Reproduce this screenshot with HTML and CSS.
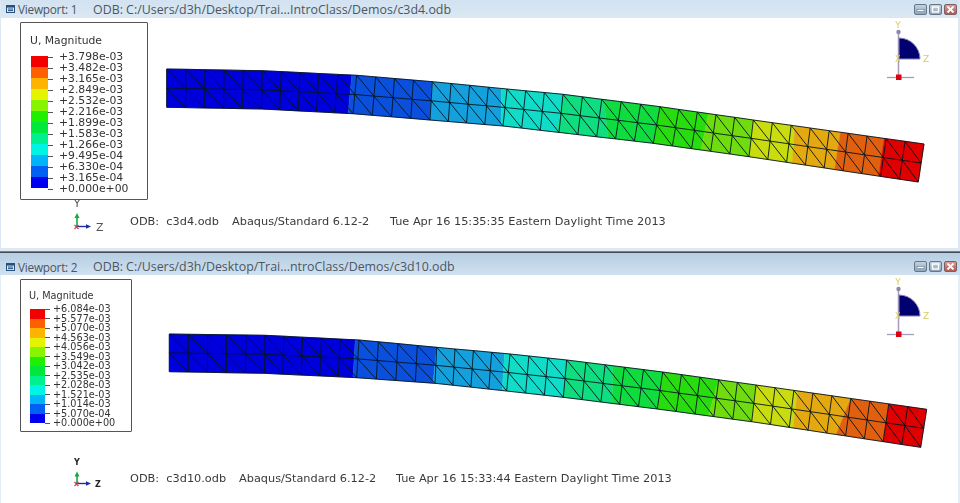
FILE: index.html
```html
<!DOCTYPE html>
<html lang="en">
<head>
<meta charset="utf-8">
<title>Viewports</title>
<link rel="stylesheet" href="styles.css">
</head>
<body>
<section class="viewport vp-one">
  <header class="titlebar">
    <svg class="win-icon" width="9" height="8" viewBox="0 0 9 8"><rect x=".5" y=".5" width="8" height="7" fill="#dbe8f4" stroke="#27507c"/><rect x="1" y="1" width="7" height="1.6" fill="#27507c"/><path d="M2 4h5M2 5.6h5" stroke="#27507c"/></svg>
    <span class="vp-name">Viewport: 1</span>
    <span class="vp-path">ODB: C:/Users/d3h/Desktop/Trai...IntroClass/Demos/c3d4.odb</span>
    <div class="win-buttons">
      <button class="win-btn"><svg width="9" height="7" viewBox="0 0 9 7"><rect x="1" y="3.5" width="7" height="2" fill="#fff" stroke="#5d6d7e" stroke-width=".5"/></svg></button>
      <button class="win-btn"><svg width="9" height="7" viewBox="0 0 9 7"><rect x="1.5" y="1" width="6" height="5" fill="none" stroke="#fff" stroke-width="1.4"/></svg></button>
      <button class="win-btn win-close"><svg width="9" height="7" viewBox="0 0 9 7"><path d="M1.5 .5l6 6M7.5 .5l-6 6" stroke="#fff" stroke-width="1.8"/></svg></button>
    </div>
  </header>
  <div class="canvas">
    <svg class="mesh" id="mesh-one" viewBox="1 18 957 230"></svg>
    <div class="legend">
      <div class="legend-title">U, Magnitude</div>
      <div class="scale">
        <div class="bar"><i class="c12"></i><i class="c11"></i><i class="c10"></i><i class="c9"></i><i class="c8"></i><i class="c7"></i><i class="c6"></i><i class="c5"></i><i class="c4"></i><i class="c3"></i><i class="c2"></i><i class="c1"></i></div>
        <ul class="vals"><li>+3.798e-03</li><li>+3.482e-03</li><li>+3.165e-03</li><li>+2.849e-03</li><li>+2.532e-03</li><li>+2.216e-03</li><li>+1.899e-03</li><li>+1.583e-03</li><li>+1.266e-03</li><li>+9.495e-04</li><li>+6.330e-04</li><li>+3.165e-04</li><li>+0.000e+00</li></ul>
      </div>
    </div>
    <svg class="axes" width="44" height="46" viewBox="0 -6 44 46">
      <text class="axis-label" x="8" y="8" text-anchor="middle">Y</text>
      <text class="axis-label" x="27" y="32">Z</text>
      <path d="M8 27.500V17" stroke="#16a83c" stroke-width="1.600"/><path d="M8 14l-2.500 5h5z" fill="#16a83c"/>
      <path d="M7 27.500h12" stroke="#1a2ea8" stroke-width="1.400"/><path d="M22 27.500l-5-2.300v4.600z" fill="#1a2ea8"/>
      <path d="M5.500 26l4 4M9.500 26l-4 4" stroke="#c8404a" stroke-width="1.100"/>
    </svg>
    <div class="status"><span class="st-file">ODB:&nbsp; c3d4.odb</span><span class="st-ver">Abaqus/Standard 6.12-2</span><span class="st-date">Tue Apr 16 15:35:35 Eastern Daylight Time 2013</span></div>
    <svg class="triad" width="50" height="68" viewBox="0 0 50 68">
      <text x="13" y="8" text-anchor="middle">Y</text><text x="38" y="42">Z</text>
      <path d="M13.500 12V60" stroke="#a49bbd" stroke-width="1.500"/><path d="M2 57.500H29" stroke="#a49bbd" stroke-width="1.300"/>
      <circle cx="13.500" cy="12" r="2.200" fill="#8f86ad"/>
      <path d="M14 18v21H35A21 21 0 0 0 14 18z" fill="#000070" stroke="#8d84b4" stroke-width="1"/>
      <text x="10" y="42" class="tri-x">X</text>
      <rect x="11" y="54.500" width="5.500" height="5.500" fill="#dc0010"/>
    </svg>
  </div>
</section>
<div class="divider"></div>
<section class="viewport vp-two">
  <header class="titlebar">
    <svg class="win-icon" width="9" height="8" viewBox="0 0 9 8"><rect x=".5" y=".5" width="8" height="7" fill="#dbe8f4" stroke="#27507c"/><rect x="1" y="1" width="7" height="1.6" fill="#27507c"/><path d="M2 4h5M2 5.6h5" stroke="#27507c"/></svg>
    <span class="vp-name">Viewport: 2</span>
    <span class="vp-path">ODB: C:/Users/d3h/Desktop/Trai...ntroClass/Demos/c3d10.odb</span>
    <div class="win-buttons">
      <button class="win-btn"><svg width="9" height="7" viewBox="0 0 9 7"><rect x="1" y="3.5" width="7" height="2" fill="#fff" stroke="#5d6d7e" stroke-width=".5"/></svg></button>
      <button class="win-btn"><svg width="9" height="7" viewBox="0 0 9 7"><rect x="1.5" y="1" width="6" height="5" fill="none" stroke="#fff" stroke-width="1.4"/></svg></button>
      <button class="win-btn win-close"><svg width="9" height="7" viewBox="0 0 9 7"><path d="M1.5 .5l6 6M7.5 .5l-6 6" stroke="#fff" stroke-width="1.8"/></svg></button>
    </div>
  </header>
  <div class="canvas">
    <svg class="mesh" id="mesh-two" viewBox="1 275 957 228"></svg>
    <div class="legend">
      <div class="legend-title">U, Magnitude</div>
      <div class="scale">
        <div class="bar"><i class="c12"></i><i class="c11"></i><i class="c10"></i><i class="c9"></i><i class="c8"></i><i class="c7"></i><i class="c6"></i><i class="c5"></i><i class="c4"></i><i class="c3"></i><i class="c2"></i><i class="c1"></i></div>
        <ul class="vals"><li>+6.084e-03</li><li>+5.577e-03</li><li>+5.070e-03</li><li>+4.563e-03</li><li>+4.056e-03</li><li>+3.549e-03</li><li>+3.042e-03</li><li>+2.535e-03</li><li>+2.028e-03</li><li>+1.521e-03</li><li>+1.014e-03</li><li>+5.070e-04</li><li>+0.000e+00</li></ul>
      </div>
    </div>
    <svg class="axes" width="44" height="46" viewBox="0 -6 44 46">
      <text class="axis-label" x="8" y="9" text-anchor="middle">Y</text>
      <text class="axis-label" x="26" y="30.500">Z</text>
      <path d="M8 27.500V19" stroke="#16a83c" stroke-width="1.600"/><path d="M8 15.500l-2.500 5h5z" fill="#16a83c"/>
      <path d="M7 27.500h12" stroke="#1a2ea8" stroke-width="1.400"/><path d="M22 27.500l-5-2.300v4.600z" fill="#1a2ea8"/>
      <path d="M5.500 26l4 4M9.500 26l-4 4" stroke="#c8404a" stroke-width="1.100"/>
    </svg>
    <div class="status"><span class="st-file">ODB:&nbsp; c3d10.odb</span><span class="st-ver">Abaqus/Standard 6.12-2</span><span class="st-date">Tue Apr 16 15:33:44 Eastern Daylight Time 2013</span></div>
    <svg class="triad" width="50" height="68" viewBox="0 0 50 68">
      <text x="13" y="8" text-anchor="middle">Y</text><text x="38" y="42">Z</text>
      <path d="M13.500 12V60" stroke="#a49bbd" stroke-width="1.500"/><path d="M2 57.500H29" stroke="#a49bbd" stroke-width="1.300"/>
      <circle cx="13.500" cy="12" r="2.200" fill="#8f86ad"/>
      <path d="M14 18v21H35A21 21 0 0 0 14 18z" fill="#000070" stroke="#8d84b4" stroke-width="1"/>
      <text x="10" y="42" class="tri-x">X</text>
      <rect x="11" y="54.500" width="5.500" height="5.500" fill="#dc0010"/>
    </svg>
  </div>
</section>
<script src="mesh.js"></script>
</body>
</html>
```
FILE: styles.css
```css
* { box-sizing: border-box; }
html, body { margin: 0; height: 100%; }
body {
  width: 960px;
  height: 503px;
  overflow: hidden;
  display: flex;
  flex-direction: column;
  background: #dfeaf5;
  font-family: "DejaVu Sans", sans-serif;
}
.viewport { display: flex; flex-direction: column; flex: none; padding: 0 2px 0 1px; }
.vp-one { height: 251px; padding-bottom: 3px; background: #dce9f5; }
.vp-two { height: 250px; background: linear-gradient(#b6cde2, #d0e1f0 22px, #e4eef8 22px); }
.divider { flex: none; height: 2px; background: linear-gradient(#8c97a3, #2e343b); }

.titlebar {
  display: flex;
  align-items: center;
  flex: none;
  padding-left: 5px;
  color: #4c5661;
  font: 12.4px "Open Sans", sans-serif;
  white-space: nowrap;
}
.vp-one .titlebar { height: 18px; background: linear-gradient(#d2e2f0, #dbe8f4); }
.vp-two .titlebar { height: 22px; padding-top: 5px; }
.win-icon { flex: none; margin-right: 3px; }
.vp-name { width: 75px; font-size: 11.800px; letter-spacing: -.25px; }
.vp-path { flex: 1; }
.win-buttons { display: flex; gap: 2px; margin-right: 1px; }
.win-btn {
  display: flex;
  align-items: center;
  justify-content: center;
  width: 13px;
  height: 11px;
  padding: 0;
  border: 1px solid #66778a;
  border-radius: 2px;
  background: linear-gradient(#c3d3e2, #8fa5ba);
}
.win-close { background: linear-gradient(#dc9a94, #b45a52); border-color: #7a5f64; }

.canvas { position: relative; flex: 1; background: #fff; filter: blur(.35px); }
.mesh { display: block; width: 100%; height: 100%; }

.legend {
  position: absolute;
  border: 1px solid #555;
  border-radius: 1px;
  background: #fff;
  color: #333;
}
.vp-one .legend { left: 19px; top: 4px; width: 128px; height: 178px; padding: 12px 0 0 10px; font-size: 10.800px; }
.vp-two .legend { left: 19px; top: 4px; width: 112px; height: 153px; padding: 10px 0 0 9px; font-size: 9.700px; }
.legend-title { margin-left: -1px; line-height: 12px; }
.scale { display: flex; }
.vp-one .scale { margin-top: 4px; }
.vp-two .scale { margin-top: 2px; }
.bar { display: flex; flex-direction: column; flex: none; }
.bar i { display: block; flex: 1; }
.vp-one .bar { width: 17px; height: 132px; margin-top: 5px; }
.vp-two .bar { width: 15px; height: 114px; margin-top: 5px; }
.c1 { background: #0000f0; }
.c2 { background: #0060f4; }
.c3 { background: #00b4f8; }
.c4 { background: #00f4e4; }
.c5 { background: #00f090; }
.c6 { background: #00e83c; }
.c7 { background: #20f000; }
.c8 { background: #88f400; }
.c9 { background: #e4f400; }
.c10 { background: #fcb400; }
.c11 { background: #fc6000; }
.c12 { background: #f40000; }
.vals { margin: 0; padding: 0; list-style: none; }
.vals li { position: relative; white-space: nowrap; }
.vp-one .vals li { height: 11px; line-height: 11px; padding-left: 11px; }
.vp-two .vals li { height: 9.500px; line-height: 9.500px; padding-left: 8px; }
.vals li::before {
  content: "";
  position: absolute;
  left: 0;
  top: 50%;
  width: 5px;
  border-top: 1px solid #555;
}

.axes { position: absolute; left: 68px; top: 175px; }
.axis-label { fill: #555; font-size: 11px; }
.vp-two .axis-label { fill: #222; font-size: 8px; font-weight: 700; }

.status {
  position: absolute;
  left: 129px;
  top: 197px;
  display: flex;
  color: #3a3a3a;
  font-size: 11.300px;
  line-height: 14px;
  white-space: pre;
}
.vp-one .st-file { width: 102px; }
.vp-one .st-ver { width: 158px; }
.vp-two .st-file { width: 109px; }
.vp-two .st-ver { width: 157px; }

.triad { position: absolute; left: 884px; top: 2px; }
.triad text { fill: #d8cc5c; font-size: 9px; }
.triad .tri-x { font-size: 8px; }
```
FILE: mesh.js
```js
// Beam outlines and contour bands, in page coordinates.
var COLORS = ['#0000dc', '#0a50dc', '#14a0dc', '#10dcc8', '#10dc80', '#10dc40', '#28dc10', '#70dc10', '#c8dc10', '#e4a810', '#e06010', '#e00000'];
var KEYS = [0, 5, 10, 14, 18, 21, 26, 31, 40];
var NS = 'http://www.w3.org/2000/svg';

var BEAMS = [
  {
    id: 'mesh-one',
    top: [[166.7, 69], [262.3, 70.7], [356.7, 75.3], [432.3, 81.7], [507, 89], [563, 94.3], [660, 106.7], [753.3, 120], [924, 144]],
    bot: [[166.7, 107.3], [261.5, 109], [353, 113.7], [430, 120], [503, 126], [559, 132.4], [653.3, 143.3], [749, 156.7], [918.3, 182]],
    bandsTop: [9.74, 14, 17.7, 21, 23.1, 26, 28.6, 31, 33.2, 35.6, 37.9],
    bandsBot: [9.73, 14, 17.9, 20.9, 23.6, 26, 28.5, 31, 33.3, 35.55, 37.9]
  },
  {
    id: 'mesh-two',
    top: [[169.3, 334], [265, 335.3], [359, 340], [436.7, 347.3], [510, 354], [566.7, 360], [662.7, 372], [756, 385], [926.7, 409.3]],
    bot: [[169.3, 371.7], [264.5, 373.3], [356.7, 377.7], [435, 383.3], [506.7, 391], [563.3, 397.3], [657.3, 409], [751.7, 421.7], [920.7, 447.3]],
    bandsTop: [9.8, 14, 17.7, 21, 23.4, 26, 29, 31, 33.2, 36, 38],
    bandsBot: [9.8, 13.9, 17.75, 21, 23.6, 26, 28.7, 31, 33.2, 35.5, 38]
  }
];

function at(edge, i) {
  var k = 0;
  while (k < KEYS.length - 2 && i > KEYS[k + 1]) k++;
  var t = (i - KEYS[k]) / (KEYS[k + 1] - KEYS[k]);
  return [edge[k][0] + (edge[k + 1][0] - edge[k][0]) * t, edge[k][1] + (edge[k + 1][1] - edge[k][1]) * t];
}
function mid(a, b) { return [(a[0] + b[0]) / 2, (a[1] + b[1]) / 2]; }
function str(p) { return p[0].toFixed(1) + ',' + p[1].toFixed(1); }

function add(svg, tag, attrs) {
  var el = document.createElementNS(NS, tag);
  for (var k in attrs) el.setAttribute(k, attrs[k]);
  svg.appendChild(el);
}

function span(edge, a, b) {
  var pts = [at(edge, a)];
  for (var i = Math.ceil(a + 0.001); i < b; i++) pts.push(at(edge, i));
  pts.push(at(edge, b));
  return pts;
}

BEAMS.forEach(function (beam) {
  var svg = document.getElementById(beam.id);
  var tops = [0].concat(beam.bandsTop, [40]);
  var bots = [0].concat(beam.bandsBot, [40]);

  COLORS.forEach(function (color, n) {
    var up = span(beam.top, tops[n], tops[n + 1]);
    var down = span(beam.bot, bots[n], bots[n + 1]).reverse();
    add(svg, 'polygon', { points: up.concat(down).map(str).join(' '), fill: color, stroke: color, 'stroke-width': 0.4 });
  });

  var d = '';
  function seg(a, b) { d += 'M' + str(a) + 'L' + str(b); }
  for (var i = 0; i <= 40; i++) {
    var t = at(beam.top, i), b = at(beam.bot, i), m = mid(t, b);
    seg(t, b);
    if (i < 40) {
      var t2 = at(beam.top, i + 1), b2 = at(beam.bot, i + 1), m2 = mid(t2, b2);
      seg(t, t2);
      seg(m, m2);
      seg(b, b2);
      seg(t, m2);
      seg(m, b2);
    }
  }
  add(svg, 'path', { d: d, fill: 'none', stroke: '#04141f', 'stroke-width': 0.9 });
});
```
